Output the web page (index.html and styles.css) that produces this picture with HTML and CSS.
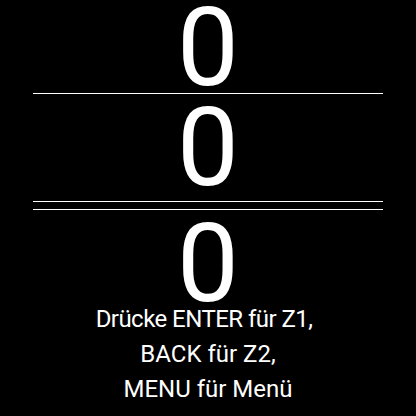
FILE: index.html
```html
<!DOCTYPE html>
<html>
<head>
<meta charset="utf-8">
<link rel="stylesheet" href="styles.css">
</head>
<body>
<div class="screen">
  <div class="num first">0</div>
  <div class="rule"></div>
  <div class="num second">0</div>
  <div class="rule"></div>
  <div class="gap"></div>
  <div class="rule"></div>
  <div class="num third">0</div>
  <div class="hint">
    <div class="line tight">Drücke ENTER für Z1,</div>
    <div class="line">BACK für Z2,</div>
    <div class="line">MENU für Menü</div>
  </div>
</div>
</body>
</html>
```
FILE: styles.css
```css
html, body {
  margin: 0;
  padding: 0;
  background: #000;
}
.screen {
  width: 416px;
  height: 416px;
  display: flex;
  flex-direction: column;
  align-items: center;
  overflow: hidden;
  color: #fff;
  font-family: Roboto, "Noto Sans", sans-serif;
}
.num {
  font-size: 110px;
  text-align: center;
  width: 100%;
  flex: none;
}
.first {
  height: 93px;
  line-height: 95px;
}
.second {
  height: 107px;
  line-height: 107px;
}
.third {
  height: 92px;
  line-height: 107px;
}
.rule {
  width: 350px;
  height: 1px;
  background: #fff;
  flex: none;
}
.gap {
  height: 7px;
  flex: none;
}
.hint {
  font-size: 24px;
  line-height: 35px;
  text-align: center;
  flex: none;
  display: flex;
  flex-direction: column;
  align-items: center;
}
.line {
  white-space: nowrap;
}
.tight {
  letter-spacing: -0.55px;
  padding-right: 8px;
}
```
